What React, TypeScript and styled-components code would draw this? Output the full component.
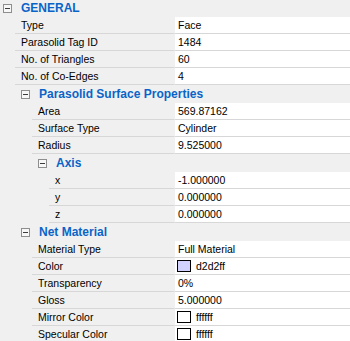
import React from 'react';
import styled, { createGlobalStyle } from 'styled-components';

const GlobalStyle = createGlobalStyle`
  body {
    margin: 0;
    background: #f0f0f0;
    font-family: "Liberation Sans", Arial, sans-serif;
    font-size: 10.5px;
    color: #000;
    overflow: hidden;
  }
`;

const Grid = styled.div`
  width: 350px;
  margin-top: -1px;
  background: #f0f0f0;
`;

const Row = styled.div`
  display: flex;
  height: 17px;
`;

const Gutter = styled.div<{ $w: number }>`
  flex: none;
  width: ${p => p.$w}px;
`;

const Label = styled.div`
  flex: 1;
  min-width: 0;
  padding: 1px 0 0 6px;
  line-height: 15px;
  white-space: nowrap;
  overflow: hidden;
  border-bottom: 1px solid #d7d7d7;
`;

const Value = styled.div`
  flex: none;
  width: 172px;
  display: flex;
  align-items: center;
  gap: 5px;
  padding: 1px 0 0 3px;
  line-height: 15px;
  background: #fff;
  border-left: 1px solid #f0f0f0;
  border-bottom: 1px solid #d7d7d7;
  white-space: nowrap;
`;

const Swatch = styled.span<{ $color: string }>`
  flex: none;
  width: 12px;
  height: 10px;
  margin-left: -1px;
  margin-top: -1px;
  border: 1px solid #000;
  background: ${p => p.$color};
`;

const CategoryRow = styled.div<{ $pad: number }>`
  display: flex;
  align-items: center;
  height: 17px;
  padding-left: ${p => p.$pad}px;
  border-bottom: 1px solid #f0f0f0;
`;

const Toggle = styled.span`
  position: relative;
  flex: none;
  width: 7px;
  height: 7px;
  margin-top: 1px;
  border: 1px solid #8e8e8e;
  background: #f7f7f7;
  &::after {
    content: '';
    position: absolute;
    left: 1px;
    top: 3px;
    width: 5px;
    height: 1px;
    background: #3c3c3c;
  }
`;

const CategoryName = styled.span`
  margin-left: 9px;
  padding-top: 1px;
  font-size: 12px;
  font-weight: bold;
  color: #0a64c8;
  line-height: 15px;
  white-space: nowrap;
`;

type Prop = { label: string; value: string; swatch?: string };
type Category = { name: string; items: (Prop | Category)[] };

const tree: Category[] = [
  {
    name: 'GENERAL',
    items: [
      { label: 'Type', value: 'Face' },
      { label: 'Parasolid Tag ID', value: '1484' },
      { label: 'No. of Triangles', value: '60' },
      { label: 'No. of Co-Edges', value: '4' },
      {
        name: 'Parasolid Surface Properties',
        items: [
          { label: 'Area', value: '569.87162' },
          { label: 'Surface Type', value: 'Cylinder' },
          { label: 'Radius', value: '9.525000' },
          {
            name: 'Axis',
            items: [
              { label: 'x', value: '-1.000000' },
              { label: 'y', value: '0.000000' },
              { label: 'z', value: '0.000000' },
            ],
          },
        ],
      },
      {
        name: 'Net Material',
        items: [
          { label: 'Material Type', value: 'Full Material' },
          { label: 'Color', value: 'd2d2ff', swatch: '#d2d2ff' },
          { label: 'Transparency', value: '0%' },
          { label: 'Gloss', value: '5.000000' },
          { label: 'Mirror Color', value: 'ffffff', swatch: '#ffffff' },
          { label: 'Specular Color', value: 'ffffff', swatch: '#ffffff' },
        ],
      },
    ],
  },
];

const isCategory = (n: Prop | Category): n is Category => 'items' in n;

const renderNode = (node: Prop | Category, depth: number): React.ReactNode => {
  if (isCategory(node)) {
    const pad = depth === 0 ? 3 : 4 + 17 * depth;
    return (
      <React.Fragment key={node.name}>
        <CategoryRow $pad={pad}>
          <Toggle />
          <CategoryName>{node.name}</CategoryName>
        </CategoryRow>
        {node.items.map(child => renderNode(child, depth + 1))}
      </React.Fragment>
    );
  }
  return (
    <Row key={node.label}>
      <Gutter $w={15 + 17 * (depth - 1)} />
      <Label>{node.label}</Label>
      <Value>
        {node.swatch && <Swatch $color={node.swatch} />}
        {node.value}
      </Value>
    </Row>
  );
};

const App: React.FC = () => (
  <>
    <GlobalStyle />
    <Grid>{tree.map(cat => renderNode(cat, 0))}</Grid>
  </>
);

export default App;
